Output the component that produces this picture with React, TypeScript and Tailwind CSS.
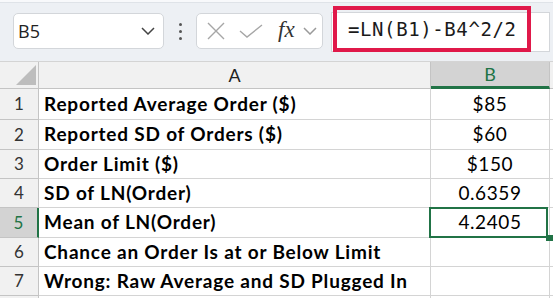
import React from 'react';

type Row = {
  n: number | null;
  label: string;
  value: string;
  h: string;
  selected?: boolean;
};

const rows: Row[] = [
  { n: 1, label: 'Reported Average Order ($)', value: '$85', h: 'h-[31px]' },
  { n: 2, label: 'Reported SD of Orders ($)', value: '$60', h: 'h-[30px]' },
  { n: 3, label: 'Order Limit ($)', value: '$150', h: 'h-[29px]' },
  { n: 4, label: 'SD of LN(Order)', value: '0.6359', h: 'h-[29px]' },
  { n: 5, label: 'Mean of LN(Order)', value: '4.2405', h: 'h-[30px]', selected: true },
  { n: 6, label: 'Chance an Order Is at or Below Limit', value: '', h: 'h-[29px]' },
  { n: 7, label: 'Wrong: Raw Average and SD Plugged In', value: '', h: 'h-[29px]' },
  { n: null, label: '', value: '', h: 'h-[29px]' },
];

const Chevron = ({ className }: { className?: string }) => (
  <svg width="14" height="8" viewBox="0 0 14 8" className={className}>
    <polyline points="1,1 7,7 13,1" fill="none" stroke="currentColor" strokeWidth="1.5" />
  </svg>
);

export default function App() {
  return (
    <div className="w-[553px] h-[298px] overflow-hidden bg-[#edf0f4] font-['Lato',sans-serif]">
      {/* formula bar */}
      <div className="h-[61px] flex flex-col">
        <div className="h-[3px] bg-[#f8f9fb] border-b border-[#dfe3e8]" />
        <div className="flex items-start pl-[13px] pt-[10px] relative flex-1">
          <div className="w-[151px] h-[36px] bg-white border border-[#d3d6da] rounded-[5px] flex items-center pl-[4px] pr-[8px] justify-between">
            <span className="font-['Open_Sans',sans-serif] text-[18px] text-[#222]">B5</span>
            <Chevron className="text-[#444]" />
          </div>
          <div className="w-[32px] h-[36px] flex flex-col items-center justify-center gap-[4px]">
            <span className="w-[3px] h-[3px] rounded-full bg-[#555]" />
            <span className="w-[3px] h-[3px] rounded-full bg-[#555]" />
            <span className="w-[3px] h-[3px] rounded-full bg-[#555]" />
          </div>
          <div className="w-[127px] h-[36px] bg-white border border-[#d3d6da] rounded-[5px] flex items-center pl-[10px]">
            <svg width="18" height="18" viewBox="0 0 18 18">
              <path d="M1 1 L17 17 M17 1 L1 17" stroke="#a6a6a6" strokeWidth="1.4" fill="none" />
            </svg>
            <svg width="24" height="14" viewBox="0 0 24 14" className="ml-[14px]">
              <polyline points="1,7 8,13 23,1" stroke="#a6a6a6" strokeWidth="1.4" fill="none" />
            </svg>
            <span className="ml-[15px] font-['Liberation_Serif',serif] italic text-[23px] leading-none text-[#333] -mt-[3px]">fx</span>
            <Chevron className="ml-[8px] text-[#9a9a9a]" />
          </div>
          <div className="ml-[8px] w-[219px] h-[40px] mt-[-1px] bg-white border border-[#d3d6da]" />
          {/* annotation box */}
          <div className="absolute left-[333px] top-[3px] w-[198px] h-[46px] border-[4px] border-[#e0194a] flex items-center pl-[11px]">
            <span className="font-['DejaVu_Sans_Mono',monospace] text-[19px] tracking-[0.6px] text-[#1a1a1a]">=LN(B1)-B4^2/2</span>
          </div>
        </div>
      </div>

      {/* grid */}
      <div className="bg-white">
        <div className="flex h-[28px] bg-[#f1f1f1] border-t border-[#d4d4d4]">
          <div className="w-[39px] border-r border-b border-[#c4c4c4] relative">
            <svg width="20" height="20" viewBox="0 0 20 20" className="absolute left-[16px] top-[3px]">
              <polygon points="20,0 20,20 0,20" fill="#bdbdbd" />
            </svg>
          </div>
          <div className="w-[392px] border-r border-b border-[#c4c4c4] flex items-center justify-center text-[18px] text-[#222]">A</div>
          <div className="w-[119px] bg-[#d3d3d3] border-r border-[#c4c4c4] border-b-[3px] border-b-[#217346] flex items-center justify-center text-[18px] text-[#217346]">B</div>
          <div className="flex-1 border-b border-[#c4c4c4]" />
        </div>
        {rows.map((r, i) => (
          <div key={i} className={`flex ${r.h}`}>
            <div
              className={
                r.selected
                  ? 'w-[39px] bg-[#d3d3d3] border-r-2 border-r-[#217346] border-b border-b-[#c4c4c4] flex items-center justify-center text-[17px] text-[#217346]'
                  : 'w-[39px] bg-[#f1f1f1] border-r border-b border-[#c4c4c4] flex items-center justify-center text-[17px] text-[#333]'
              }
            >
              {r.n}
            </div>
            <div className="w-[392px] border-r border-b border-[#d4d4d4] flex items-center pl-[5px] font-bold text-[19px] tracking-[0.8px] text-black whitespace-nowrap">
              {r.label}
            </div>
            <div className="w-[119px] border-r border-b border-[#d4d4d4] flex items-center justify-center text-[19px] tracking-[0.6px] text-black relative">
              {r.value}
              {r.selected && (
                <>
                  <div className="absolute -left-[2px] -top-[1px] right-[1px] -bottom-[1px] border-2 border-[#217346]" />
                  <div className="absolute left-[115px] top-[27px] w-[7px] h-[6px] bg-[#217346] z-10" />
                </>
              )}
            </div>
            <div className="flex-1 border-b border-[#d4d4d4]" />
          </div>
        ))}
      </div>
    </div>
  );
}
